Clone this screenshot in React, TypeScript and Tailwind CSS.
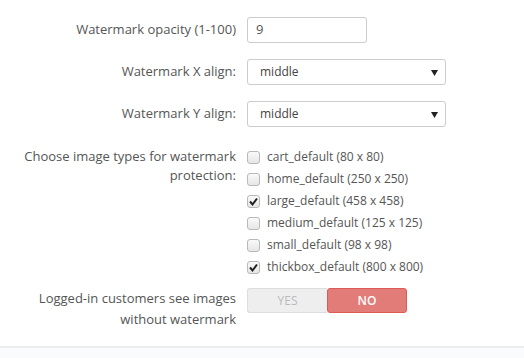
import React from "react";

const types = [
  { name: "cart_default (80 x 80)", checked: false },
  { name: "home_default (250 x 250)", checked: false },
  { name: "large_default (458 x 458)", checked: true },
  { name: "medium_default (125 x 125)", checked: false },
  { name: "small_default (98 x 98)", checked: false },
  { name: "thickbox_default (800 x 800)", checked: true },
];

const Caret = () => (
  <svg width="7" height="6" viewBox="0 0 7 6" className="absolute right-[7px] top-[10px]">
    <path d="M0 0 H7 L3.5 6 Z" fill="#222" />
  </svg>
);

const Check = ({ checked }: { checked: boolean }) => (
  <span className="relative w-[13px] h-[13px] rounded-[3px] border border-[#b9b9b9] bg-gradient-to-b from-[#fafafa] to-[#e6e6e6] shrink-0">
    {checked && (
      <svg width="11" height="11" viewBox="0 0 11 11" className="absolute left-[0px] top-[0px]">
        <path d="M2 5.5 L4.5 8.5 L9 2.5" stroke="#222" strokeWidth="2" fill="none" />
      </svg>
    )}
  </span>
);

export default function App() {
  return (
    <div className="w-[524px] h-[358px] bg-white text-[13px] text-[#555] font-['Open_Sans',sans-serif] flex flex-col">
      <div className="flex flex-col pt-[17px] flex-1">
        <div className="flex items-center">
          <label className="w-[236px] text-right">Watermark opacity (1-100)</label>
          <div className="ml-[11px] w-[120px] h-[26px] border border-[#ccc] rounded-[3px] px-[8px] flex items-center text-[#555]">9</div>
        </div>
        <div className="flex items-center mt-[16px]">
          <label className="w-[236px] text-right">Watermark X align:</label>
          <div className="relative ml-[11px] w-[199px] h-[26px] border border-[#ccc] rounded-[3px] pl-[12px] flex items-center text-[12px] text-[#444]">
            middle
            <Caret />
          </div>
        </div>
        <div className="flex items-center mt-[16px]">
          <label className="w-[236px] text-right">Watermark Y align:</label>
          <div className="relative ml-[11px] w-[199px] h-[26px] border border-[#ccc] rounded-[3px] pl-[12px] flex items-center text-[12px] text-[#444]">
            middle
            <Caret />
          </div>
        </div>
        <div className="flex mt-[19px]">
          <label className="w-[236px] text-right leading-[19px] pt-[1px]">
            Choose image types for watermark protection:
          </label>
          <div className="ml-[11px] flex flex-col">
            {types.map((t) => (
              <div key={t.name} className="flex items-center h-[22px]">
                <Check checked={t.checked} />
                <span className="ml-[7px] text-[12px] text-[#555]">{t.name}</span>
              </div>
            ))}
          </div>
        </div>
        <div className="flex mt-[10px]">
          <label className="w-[236px] text-right leading-[21px]">
            Logged-in customers see images without watermark
          </label>
          <div className="ml-[11px] flex h-[25px] text-[12px]">
            <div className="w-[80px] flex items-center justify-center bg-[#eee] border border-[#ddd] border-r-0 rounded-l-[3px] text-[#bbb]">
              YES
            </div>
            <div className="w-[80px] flex items-center justify-center bg-[#e27c79] border border-[#dd5a55] rounded-[3px] text-white font-semibold">
              NO
            </div>
          </div>
        </div>
      </div>
      <div className="h-[12px] border-t-2 border-[#eceeee] bg-[#fafbfc]" />
    </div>
  );
}
